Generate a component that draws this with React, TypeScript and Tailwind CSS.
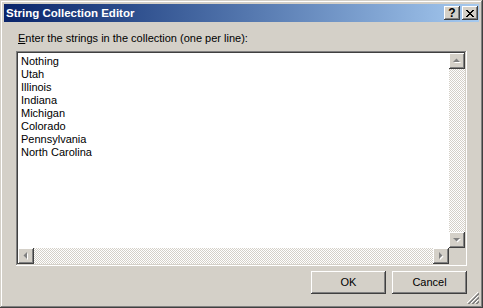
import React from 'react';

const raised =
  'bg-[#d4d0c8] shadow-[inset_-1px_-1px_#404040,inset_1px_1px_#fff,inset_-2px_-2px_#808080,inset_2px_2px_#d4d0c8]';
const checker =
  'bg-[conic-gradient(#fff_90deg,#d4d0c8_90deg_180deg,#fff_180deg_270deg,#d4d0c8_270deg)] bg-[length:2px_2px]';

const items = [
  'Nothing',
  'Utah',
  'Illinois',
  'Indiana',
  'Michigan',
  'Colorado',
  'Pennsylvania',
  'North Carolina',
];

// grey (disabled) arrow with white emboss
function Arrow({ dir }: { dir: 'up' | 'down' | 'left' | 'right' }) {
  const pts: Record<string, string> = {
    up: '4,9 11,9 7.5,5.5',
    down: '4,6 11,6 7.5,9.5',
    left: '9,4 9,11 5.5,7.5',
    right: '6,4 6,11 9.5,7.5',
  };
  return (
    <div className={`w-[16px] h-[16px] shrink-0 ${raised}`}>
      <svg width="16" height="16" viewBox="0 0 16 16">
        <polygon points={pts[dir]} fill="#fff" transform="translate(1 1)" />
        <polygon points={pts[dir]} fill="#808080" />
      </svg>
    </div>
  );
}

function CaptionButton({ children }: { children: React.ReactNode }) {
  return (
    <div className={`w-[16px] h-[14px] flex items-center justify-center ${raised}`}>
      {children}
    </div>
  );
}

function DialogButton({ label }: { label: string }) {
  return (
    <div
      className={`w-[75px] h-[23px] flex items-center justify-center text-[11px] text-black ${raised}`}
    >
      {label}
    </div>
  );
}

export default function App() {
  return (
    <div
      className="relative w-[483px] h-[308px] p-[4px] bg-[#d4d0c8] shadow-[inset_-1px_-1px_#404040,inset_1px_1px_#d4d0c8,inset_-2px_-2px_#808080,inset_2px_2px_#fff] flex flex-col overflow-hidden"
      style={{ fontFamily: '"Liberation Sans", Arial, sans-serif' }}
    >
      {/* Title bar */}
      <div className="h-[18px] flex items-center pl-[2px] pr-[1px] bg-gradient-to-r from-[#0a246a] to-[#a6caf0]">
        <span className="flex-1 text-white font-bold text-[11.5px] leading-[18px]">
          String Collection Editor
        </span>
        <div className="flex gap-[2px]">
          <CaptionButton>
            <span className="text-[12px] font-bold leading-none text-black">?</span>
          </CaptionButton>
          <CaptionButton>
            <svg width="8" height="7" viewBox="0 0 8 7">
              <path d="M0 0h2v1H0zM6 0h2v1H6zM1 1h2v1H1zM5 1h2v1H5zM2 2h4v1H2zM3 3h2v1H3zM2 4h4v1H2zM1 5h2v1H1zM5 5h2v1H5zM0 6h2v1H0zM6 6h2v1H6z" fill="#000" />
            </svg>
          </CaptionButton>
        </div>
      </div>

      {/* Body */}
      <div className="flex-1 flex flex-col px-[12px] pt-[10px]">
        <div className="ml-[2px] h-[13px] leading-[13px] text-[11px] text-black">
          <span className="underline">E</span>nter the strings in the collection (one per line):
        </div>

        {/* Text box */}
        <div className="mt-[6px] h-[215px] p-[2px] bg-white shadow-[inset_-1px_-1px_#fff,inset_1px_1px_#808080,inset_-2px_-2px_#d4d0c8,inset_2px_2px_#404040] flex flex-col">
          <div className="flex-1 flex min-h-0">
            <div className="flex-1 pl-[3px] pt-[2px] text-[11px] leading-[13px] text-black">
              {items.map((s) => (
                <div key={s}>{s}</div>
              ))}
            </div>
            <div className="w-[16px] flex flex-col">
              <Arrow dir="up" />
              <div className={`flex-1 ${checker}`} />
              <Arrow dir="down" />
            </div>
          </div>
          <div className="h-[16px] flex">
            <Arrow dir="left" />
            <div className={`flex-1 ${checker}`} />
            <Arrow dir="right" />
            <div className="w-[16px] bg-[#d4d0c8]" />
          </div>
        </div>

        {/* Buttons */}
        <div className="mt-[5px] flex justify-end gap-[6px]">
          <DialogButton label="OK" />
          <DialogButton label="Cancel" />
        </div>
      </div>

      {/* Resize grip */}
      <svg
        className="absolute right-[4px] bottom-[4px]"
        width="12"
        height="12"
        viewBox="0 0 12 12"
      >
        <path d="M11 0L0 11M11 4L4 11M11 8L8 11" stroke="#fff" strokeWidth="1" />
        <path d="M12 1L1 12M12 2L2 12M12 5L5 12M12 6L6 12M12 9L9 12M12 10L10 12" stroke="#808080" strokeWidth="1" />
      </svg>
    </div>
  );
}
